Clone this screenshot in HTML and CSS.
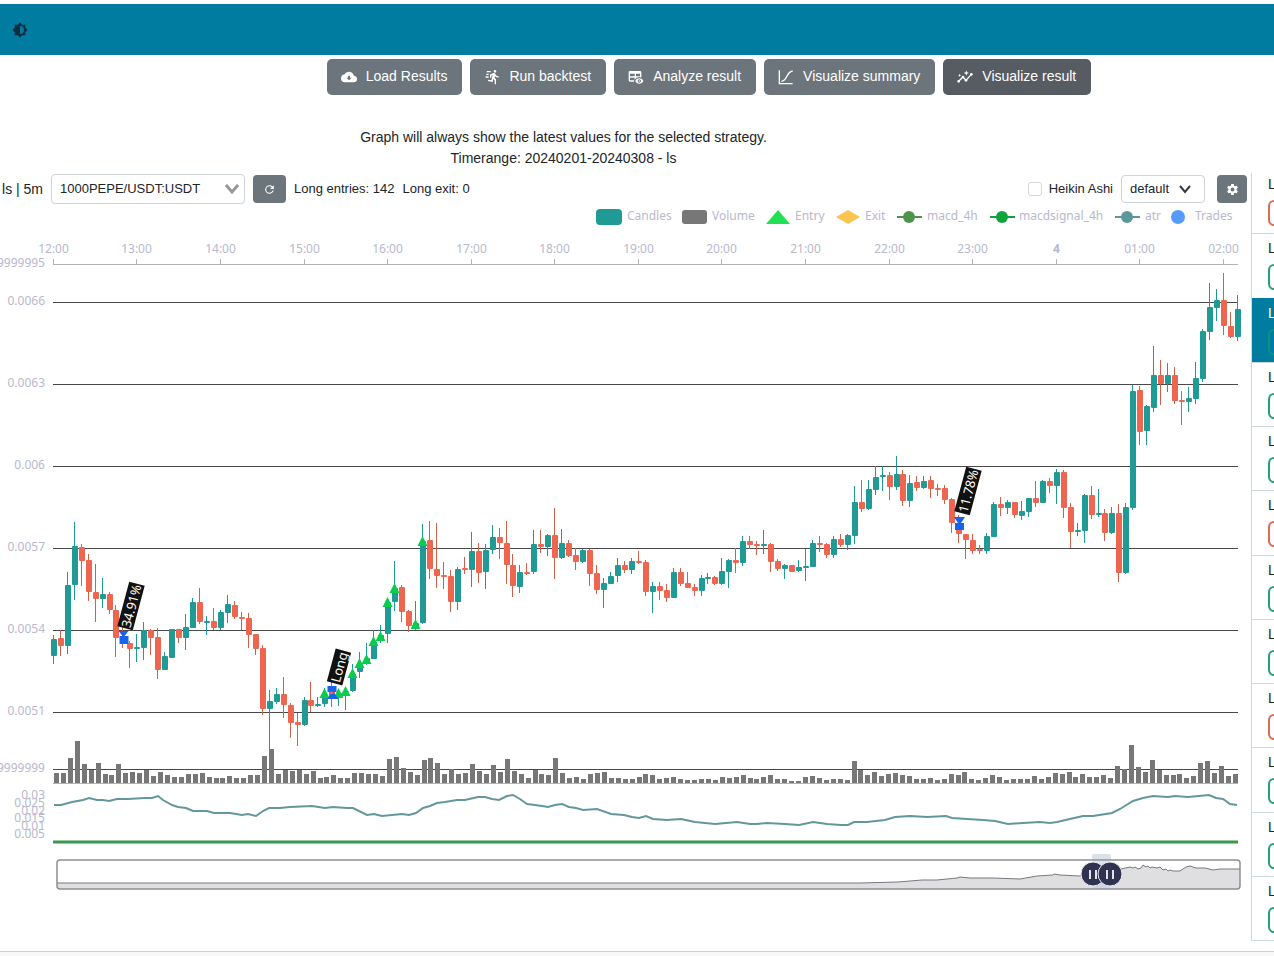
FILE: index.html
```html
<!DOCTYPE html>
<html lang="en">
<head>
<meta charset="utf-8">
<title>Backtest result</title>
<link rel="stylesheet" href="styles.css">
</head>
<body>
<header class="topbar">
  <button class="theme-toggle" aria-label="Toggle theme">
    <svg class="icon" viewBox="0 0 24 24"><path fill-rule="evenodd" d="M12,18V6A6,6 0 0,1 18,12A6,6 0 0,1 12,18M20,15.31L23.31,12L20,8.69V4H15.31L12,.69L8.69,4H4V8.69L.69,12L4,15.31V20H8.69L12,23.31L15.31,20H20V15.31Z"/></svg>
  </button>
</header>
<nav class="tabs">
  <button class="tab"><svg class="icon" viewBox="0 0 24 24"><path d="M8,13H10.55V10H13.45V13H16L12,17M19.35,10.04C18.67,6.59 15.64,4 12,4C9.11,4 6.61,5.64 5.36,8.04C2.35,8.36 0,10.9 0,14A6,6 0 0,0 6,20H19A5,5 0 0,0 24,15C24,12.36 21.95,10.22 19.35,10.04Z"/></svg><span>Load Results</span></button>
  <button class="tab"><svg class="icon" viewBox="0 0 24 24"><path d="M16.5,5.5A2,2 0 0,0 18.5,3.5A2,2 0 0,0 16.5,1.5A2,2 0 0,0 14.5,3.5A2,2 0 0,0 16.5,5.5M12.9,19.4L13.9,15L16,17V23H18V15.5L15.9,13.5L16.5,10.5C17.89,12.09 19.89,13 22,13V11C20.24,11.03 18.6,10.11 17.7,8.6L16.7,7C16.34,6.4 15.7,6 15,6C14.7,6 14.5,6.1 14.2,6.1L9,8.3V13H11V9.6L12.8,8.9L11.2,17L6.3,16L5.9,18L12.9,19.4M4,9A1,1 0 0,1 3,8A1,1 0 0,1 4,7H7V9H4M5,5A1,1 0 0,1 4,4A1,1 0 0,1 5,3H10V5H5M3,13A1,1 0 0,1 2,12A1,1 0 0,1 3,11H7V13H3Z"/></svg><span>Run backtest</span></button>
  <button class="tab"><svg class="icon" viewBox="0 0 24 24"><path fill-rule="evenodd" d="M18 3H3a2 2 0 0 0-2 2v12a2 2 0 0 0 2 2h6.4l-.4-1 .4-1H3v-4h7v3l2-2.2V13h1.2a8 8 0 0 1 6.8-.4V5a2 2 0 0 0-2-2M10 11H3V7h7zM18 11h-6V7h6zM17 14c2.7 0 5.1 1.700 6 4-.9 2.300-3.300 4-6 4s-5.100-1.700-6-4c.9-2.300 3.300-4 6-4M17 15.500a2.500 2.500 0 1 0 0 5 2.500 2.500 0 0 0 0-5M17 17a1 1 0 1 1 0 2 1 1 0 0 1 0-2"/></svg><span>Analyze result</span></button>
  <button class="tab"><svg class="icon line" viewBox="0 0 24 24"><path d="M2 2v20h20M5 18.500C15 18 11 5 22 3"/></svg><span>Visualize summary</span></button>
  <button class="tab active"><svg class="icon line" viewBox="0 0 24 24"><path d="M2.500 18.500L9 12l4.500 5L21.500 8"/><g class="solid"><circle cx="2.500" cy="18.500" r="2"/><circle cx="9" cy="12" r="2"/><circle cx="13.500" cy="17" r="2"/><circle cx="21.500" cy="8" r="2"/><path d="M14 2l1 3 3 1-3 1-1 3-1-3-3-1 3-1zM4 7l.7 1.800 1.800.7-1.800.7L4 12l-.7-1.800-1.800-.7 1.800-.7z"/></g></svg><span>Visualize result</span></button>
</nav>
<div class="content">
  <main class="panel">
    <div class="summary">
      <p>Graph will always show the latest values for the selected strategy.</p>
      <p>Timerange: 20240201-20240308 - ls</p>
    </div>
    <div class="toolbar">
      <label class="strategy" for="pair">ls | 5m</label>
      <div class="select pair">
        <select id="pair"><option>1000PEPE/USDT:USDT</option></select>
        <svg class="chevron thick" viewBox="0 0 14 10"><path d="M1 1l6 7 6-7"/></svg>
      </div>
      <button class="square refresh" aria-label="Refresh chart"><svg class="icon small" viewBox="0 0 24 24"><path d="M17.65,6.35C16.2,4.9 14.21,4 12,4A8,8 0 0,0 4,12A8,8 0 0,0 12,20C15.73,20 18.84,17.45 19.73,14H17.65C16.83,16.33 14.61,18 12,18A6,6 0 0,1 6,12A6,6 0 0,1 12,6C13.66,6 15.14,6.69 16.22,7.78L13,11H20V4L17.65,6.35Z"/></svg></button>
      <span>Long entries: 142</span>
      <span>Long exit: 0</span>
      <div class="options">
        <label class="check"><input type="checkbox"><span>Heikin Ashi</span></label>
        <div class="select plot">
          <select aria-label="Plot configuration"><option>default</option></select>
          <svg class="chevron" viewBox="0 0 14 10"><path d="M2 2l5 6 5-6"/></svg>
        </div>
        <button class="square settings" aria-label="Plot settings"><svg class="icon small" viewBox="0 0 24 24"><path d="M12,15.5A3.5,3.5 0 0,1 8.5,12A3.5,3.5 0 0,1 12,8.5A3.5,3.5 0 0,1 15.5,12A3.5,3.5 0 0,1 12,15.5M19.43,12.97C19.47,12.65 19.5,12.33 19.5,12C19.5,11.67 19.47,11.34 19.43,11L21.54,9.37C21.73,9.22 21.78,8.95 21.66,8.73L19.66,5.27C19.54,5.05 19.27,4.96 19.05,5.05L16.56,6.05C16.04,5.66 15.5,5.32 14.87,5.07L14.5,2.42C14.46,2.18 14.25,2 14,2H10C9.75,2 9.54,2.18 9.5,2.42L9.13,5.07C8.5,5.32 7.96,5.66 7.44,6.05L4.95,5.05C4.73,4.96 4.46,5.05 4.34,5.27L2.34,8.73C2.21,8.95 2.27,9.22 2.46,9.37L4.57,11C4.53,11.34 4.5,11.67 4.5,12C4.5,12.33 4.53,12.65 4.57,12.97L2.46,14.63C2.27,14.78 2.21,15.05 2.34,15.27L4.34,18.73C4.46,18.95 4.73,19.03 4.95,18.95L7.44,17.94C7.96,18.34 8.5,18.68 9.13,18.93L9.5,21.58C9.54,21.82 9.75,22 10,22H14C14.25,22 14.46,21.82 14.5,21.58L14.87,18.93C15.5,18.67 16.04,18.34 16.56,17.94L19.05,18.95C19.27,19.03 19.54,18.95 19.66,18.73L21.66,15.27C21.78,15.05 21.73,14.78 21.54,14.63L19.43,12.97Z"/></svg></button>
      </div>
    </div>
    <svg class="chart" id="chart" viewBox="0 204 1251 738" role="img" aria-label="Candlestick chart"></svg>
  </main>
  <aside class="trades">
    <ul class="trade-list">
      <li class="trade loss"><span>L</span><i></i></li>
      <li class="trade"><span>L</span><i></i></li>
      <li class="trade selected"><span>L</span><i></i></li>
      <li class="trade"><span>L</span><i></i></li>
      <li class="trade"><span>L</span><i></i></li>
      <li class="trade loss"><span>L</span><i></i></li>
      <li class="trade"><span>L</span><i></i></li>
      <li class="trade"><span>L</span><i></i></li>
      <li class="trade loss"><span>L</span><i></i></li>
      <li class="trade"><span>L</span><i></i></li>
      <li class="trade"><span>L</span><i></i></li>
      <li class="trade"><span>L</span><i></i></li>
    </ul>
  </aside>
</div>
<footer class="footer"></footer>
<script src="chart.js"></script>
</body>
</html>
```

FILE: styles.css
```css
* { box-sizing: border-box; }

body {
  margin: 0;
  min-height: 100vh;
  display: flex;
  flex-direction: column;
  overflow-x: hidden;
  background: #fff;
  color: #212529;
  font: 13px/20px "Liberation Sans", Arial, sans-serif;
}

button, select { font: inherit; }
button { border: 0; padding: 0; cursor: pointer; }

.icon { width: 16px; height: 16px; fill: currentColor; flex: none; }
.icon.small { width: 13px; height: 13px; }
.icon.line { fill: none; stroke: currentColor; stroke-width: 2; }
.icon .solid { fill: currentColor; stroke: none; }

.topbar {
  height: 51px;
  margin-top: 4px;
  padding-left: 12px;
  display: flex;
  align-items: center;
  background: #007ca1;
}
.theme-toggle { display: flex; background: none; color: #0b2f3f; }

.tabs {
  display: flex;
  justify-content: center;
  gap: 8px;
  padding: 4px 0 0 144px;
}
.tab {
  display: flex;
  align-items: center;
  gap: 9px;
  height: 36px;
  padding: 0 15px 0 14px;
  border-radius: 5px;
  background: #6c757b;
  color: #fff;
  font-size: 14px;
  white-space: nowrap;
}
.tab span { padding-bottom: 2px; }
.tab.active { background: #565c62; }

.content { display: flex; }
.panel { flex: 1; min-width: 0; padding-top: 32px; }

.summary {
  padding-right: 124px;
  text-align: center;
  font-size: 14px;
  line-height: 21px;
}
.summary p { margin: 0; }

.toolbar {
  display: flex;
  align-items: center;
  gap: 8px;
  height: 30px;
  margin-top: 5px;
  padding-right: 4px;
  white-space: nowrap;
}
.strategy { width: 43px; text-align: right; font-size: 14px; }

.select { position: relative; }
.select select {
  appearance: none;
  width: 100%;
  height: 100%;
  padding: 0 8px;
  border: 1px solid #ced4da;
  border-radius: 4px;
  background: #fff;
  color: #212529;
}
.pair { width: 194px; height: 30px; }
.plot { width: 84px; height: 28px; }
.chevron {
  position: absolute;
  top: 50%;
  right: 13px;
  width: 14px;
  height: 10px;
  margin-top: -5px;
  fill: none;
  stroke: #343a40;
  stroke-width: 2;
  pointer-events: none;
}
.pair .chevron { right: 6px; }
.chevron.thick { stroke: #999; stroke-width: 3; }

.square {
  display: flex;
  align-items: center;
  justify-content: center;
  height: 28px;
  border-radius: 4px;
  background: #6c757b;
  color: #fff;
}
.refresh { width: 33px; }
.settings { width: 30px; margin-left: 4px; }

.options { display: flex; align-items: center; gap: 8px; margin-left: auto; }
.check { display: flex; align-items: center; gap: 7px; }
.check input {
  appearance: none;
  width: 14px;
  height: 14px;
  margin: 0;
  border: 1px solid #d5d9dc;
  border-radius: 3px;
}

.chart { display: block; width: 100%; height: auto; }
.chart text { font: 12px "Noto Sans", "Open Sans", sans-serif; fill: #b9b8ce; }
.chart .bold { font-weight: bold; }
.chart .tag text { fill: #fff; font-size: 13px; }
.chart .tag rect { fill: #111; }
.chart .end { text-anchor: end; }
.chart .middle { text-anchor: middle; }
.chart .grid { stroke: #484848; }
.chart .axis { stroke: #b2b2b8; }
.chart .up { fill: #1f9a94; stroke: #1f9a94; }
.chart .down { fill: #ef6650; stroke: #d0604a; }
.chart .up rect, .chart .down rect { stroke: none; }
.chart .volume { fill: #777; }
.chart .entry { fill: #08cc4c; }
.chart .marker { fill: #1763ee; }
.chart .atr { fill: none; stroke: #64979c; stroke-width: 2; }

.trades {
  flex: none;
  width: 23px;
  height: 768px;
  margin-top: 78px;
  overflow: hidden;
  border-left: 1px solid #ced9d9;
}
.trade-list {
  display: grid;
  grid-auto-rows: 1fr;
  height: 771px;
  margin: -3px 0 0;
  padding: 0;
  list-style: none;
}
.trade {
  padding: 4px 0 0 16px;
  border-bottom: 1px solid #ced9d9;
  font-size: 14px;
  white-space: nowrap;
}
.trade span { display: block; }
.trade i {
  display: block;
  width: 64px;
  height: 26px;
  margin-top: 6px;
  border: 2px solid #22a079;
  border-radius: 6px;
}
.trade.loss i { border-color: #df6a51; }
.trade.selected { margin: -1px 0 0 -1px; padding: 5px 0 0 17px; background: #007ca1; color: #fff; }
.trade.selected i { border-color: #0b9180; }

.footer {
  flex: 1;
  margin-top: 9px;
  border-top: 1px solid #cdd1d1;
  background: #f8f8f8;
}
```

FILE: chart.js
```js
// Each candle: body top, body bottom, high, low, rising (1) or falling (0).
const candles = [
[639,656,635,664,1],[638,646,630,656,0],[585,646,572,654,1],[546,585,522,600,1],[547,561,544,586,0],
[560,592,554,601,0],[592,599,564,622,0],[594,599,578,608,1],[594,610,592,614,0],[610,638,605,657,0],
[638,644,627,648,0],[643,649,641,668,0],[647,649,634,662,1],[630,648,622,660,1],[630,638,629,655,0],
[637,670,628,679,0],[656,670,652,670,1],[629,658,629,658,1],[629,638,629,643,0],[627,638,614,650,1],
[602,628,598,628,1],[602,622,588,624,0],[621,622,616,635,1],[621,628,608,630,0],[612,628,610,630,1],
[604,613,595,623,1],[605,617,601,619,0],[617,619,612,630,0],[618,635,613,648,0],[634,649,634,655,0],
[648,709,645,715,0],[701,709,690,749,1],[694,702,688,704,1],[694,705,677,718,0],[705,723,703,738,0],
[722,725,713,746,0],[700,725,697,726,1],[700,706,682,712,0],[704,706,697,707,1],[695,704,688,707,1],
[690,699,682,707,0],[693,696,690,706,1],[691,695,687,710,1],[674,691,664,692,1],[663,672,652,678,1],
[658,663,643,665,1],[642,659,630,659,1],[635,640,625,643,1],[602,634,600,643,1],[588,602,561,611,1],
[587,612,585,622,0],[611,626,610,632,0],[623,627,601,630,1],[541,623,524,624,1],[540,569,521,579,0],
[569,576,523,588,0],[575,577,562,589,0],[576,602,570,612,0],[569,602,567,610,1],[568,570,557,574,0],
[551,570,532,587,1],[551,573,543,583,0],[550,572,544,589,1],[537,550,525,554,1],[537,543,528,559,0],
[543,565,521,584,0],[565,586,554,597,0],[572,587,565,593,1],[572,573,563,575,0],[544,572,530,574,1],
[544,547,530,553,0],[535,547,534,556,1],[535,558,508,579,0],[543,558,529,559,1],[543,556,540,557,0],
[555,562,548,570,0],[550,562,549,563,1],[550,574,549,586,0],[573,590,565,594,0],[583,590,578,608,1],
[576,584,572,584,1],[565,576,558,582,1],[565,570,561,573,0],[561,570,558,574,1],[561,562,551,564,0],
[562,592,560,596,0],[586,592,582,613,1],[586,591,582,600,0],[590,598,584,602,0],[572,598,568,598,1],
[572,584,568,586,0],[583,588,572,588,0],[587,591,584,596,0],[578,591,575,596,1],[577,579,573,584,1],
[577,584,576,585,0],[571,584,558,585,1],[560,572,559,588,1],[560,563,548,573,0],[541,563,536,566,1],
[541,545,536,549,0],[544,545,541,555,0],[544,545,530,554,1],[544,562,543,572,0],[561,569,559,571,0],
[565,569,564,579,1],[565,572,565,572,0],[567,571,560,572,1],[566,568,549,581,1],[543,567,540,567,1],
[543,545,536,552,0],[544,555,543,558,0],[539,555,536,558,1],[539,545,534,547,0],[535,545,534,550,1],
[502,536,486,544,1],[502,509,480,512,0],[489,509,480,510,1],[477,490,466,495,1],[475,477,466,491,1],
[475,487,472,500,0],[474,487,456,490,1],[474,501,470,506,0],[483,501,475,507,1],[482,488,476,491,0],
[481,488,476,489,1],[480,489,476,498,0],[488,489,484,496,0],[488,500,485,504,0],[499,523,498,533,0],
[523,534,515,543,0],[534,540,534,559,0],[540,551,534,554,0],[549,551,545,554,0],[536,551,533,554,1],
[504,537,502,537,1],[504,508,497,516,0],[502,508,500,514,1],[502,515,502,518,0],[511,516,501,520,1],
[498,512,498,517,1],[498,503,481,507,0],[481,503,480,503,1],[481,486,478,493,0],[472,486,469,504,1],
[472,508,470,518,0],[507,532,503,548,0],[530,532,523,536,1],[495,531,494,543,1],[495,515,486,519,0],
[513,515,489,517,1],[513,533,509,541,0],[513,533,507,534,1],[513,573,504,582,0],[507,573,503,574,1],
[391,508,385,510,1],[390,432,386,445,0],[406,431,405,445,1],[375,408,346,412,1],[375,384,360,405,0],
[375,384,363,392,1],[375,401,367,404,0],[400,402,391,425,0],[398,402,387,412,1],[378,399,362,404,1],
[331,379,329,382,1],[307,332,283,340,1],[300,308,289,321,1],[300,326,273,335,0],[326,337,312,338,0],
[309,337,295,341,1]];

const volumes = [
10,10,25,42,19,13,20,9,8,19,10,11,10,13,7,11,8,6,6,9,9,10,6,5,5,7,5,5,8,8,27,34,9,13,12,13,9,12,5,6,
8,5,5,10,10,9,9,7,24,26,15,11,8,23,25,20,9,14,9,10,19,12,9,18,11,24,12,9,5,13,9,8,25,10,5,6,4,9,10,11,
5,5,4,4,6,9,8,4,5,6,4,3,3,4,4,3,6,5,6,8,5,4,6,8,4,4,2,2,6,7,5,3,4,4,3,22,13,8,11,7,
9,10,8,7,4,4,5,3,4,9,8,11,4,3,5,8,6,3,4,4,4,7,4,6,10,9,11,6,9,6,6,8,5,17,14,38,16,11,23,13,
8,8,9,5,7,20,22,10,17,7,9];

// x, y pairs for the atr line
const atr = [
54,805,61,805,72,802,83,800,89,798,97,800,103,800,109,801,117,799,128,799,145,798,152,798,158,796,
163,800,172,805,178,807,186,808,193,811,207,811,214,813,230,813,242,815,248,814,256,816,263,811,269,808,
280,808,290,807,312,806,325,808,333,807,347,808,353,808,367,815,374,814,382,816,402,814,409,815,416,813,
423,808,430,806,437,803,445,802,457,800,465,800,478,797,485,797,492,799,499,800,507,796,513,795,520,799,
527,804,535,805,542,806,548,807,555,805,562,804,569,807,576,808,583,810,597,809,611,814,624,815,632,817,
639,818,646,816,653,819,667,820,681,819,695,822,715,824,737,822,750,824,757,824,767,823,785,824,799,825,
813,822,827,824,841,825,848,825,854,822,867,822,885,820,895,817,910,816,927,817,946,816,952,818,967,819,
983,820,995,821,1008,824,1023,823,1040,822,1050,823,1057,822,1070,819,1083,816,1093,816,1112,813,1120,809,
1133,801,1143,798,1153,796,1168,797,1175,796,1188,797,1209,795,1216,798,1223,799,1230,804,1237,805];

const overview = [
57,883,300,883,500,883,700,883,860,883,898,882,922,880,937,880,957,878,960,877,970,878,993,878,1020,879,
1037,876,1053,875,1054,874,1060,875,1080,876,1090,872,1110,870,1121,869,1130,867,1133,868,1135,867,1138,869,
1141,868,1143,865,1146,867,1148,866,1150,868,1152,867,1157,868,1160,867,1163,870,1166,869,1168,871,1170,870,
1173,871,1177,871,1180,871,1183,869,1186,867,1190,866,1196,868,1205,868,1213,870,1220,869,1240,869];

const hours = ["12:00","13:00","14:00","15:00","16:00","17:00","18:00","19:00","20:00","21:00","22:00","23:00","4","01:00","02:00"];
const left = 53.5, right = 1237.5;
const step = (right - left) / (candles.length - 1);
const cx = i => Math.round(left + i * step - 0.7) + 0.5;
const line = (x1, y1, x2, y2, cls) => `<line x1="${x1}" y1="${y1}" x2="${x2}" y2="${y2}" class="${cls}"/>`;
const text = (x, y, s, cls = "") => `<text x="${x}" y="${y}" class="${cls}">${s}</text>`;
let out = "";

// Legend
out += `<rect x="596" y="209" width="26" height="16" rx="4" fill="#1f9a94"/>
<rect x="682" y="210" width="25" height="14" rx="3" fill="#777"/>
<path d="M778 210l12 14h-24z" fill="#22e052"/>
<path d="M836 217l12-7 12 7-12 7z" fill="#fbc44e"/>`;
for (const [x, color] of [[909, "#4c944c"], [1002, "#0ca23c"], [1127, "#5c979c"]]) {
  out += `<path d="M${x - 12} 217h25" stroke="${color}" stroke-width="2"/><circle cx="${x}" cy="217" r="6" fill="${color}"/>`;
}
out += `<circle cx="1178" cy="217" r="7" fill="#559bfb"/>`;
for (const [x, s] of [[627, "Candles"], [712, "Volume"], [795, "Entry"], [865, "Exit"], [927, "macd_4h"], [1019, "macdsignal_4h"], [1145, "atr"], [1195, "Trades"]]) {
  out += text(x, 220, s);
}

// Axes and grid
out += line(53, 264.5, 1238, 264.5, "axis");
hours.forEach((h, k) => {
  const x = cx(k * 12);
  out += line(x, 259, x, 264, "axis") + text(x, 253, h, h === "4" ? "middle bold" : "middle");
});
["0.0066", "0.0063", "0.006", "0.0057", "0.0054", "0.0051"].forEach((p, k) => {
  const y = 302.5 + k * 82;
  out += line(53, y, 1238, y, "grid") + text(45, y + 2.5, p, "end");
});
out += text(45, 267, "9999995", "end") + text(45, 772, "9999999", "end") + line(53, 769.5, 1238, 769.5, "grid");
["0.03", "0.025", "0.02", "0.015", "0.01", "0.005"].forEach((p, k) => {
  out += text(45, 799 + Math.round(k * 7.8), p, "end");
});

// Candles
candles.forEach(([top, bottom, high, low, rising], i) => {
  const x = cx(i);
  out += `<g class="${rising ? "up" : "down"}">${line(x, high, x, low, "")}<rect x="${x - 2.5}" y="${top}" width="6" height="${Math.max(2, bottom - top)}" rx="1"/></g>`;
});

// Volume
volumes.forEach((v, i) => {
  out += `<rect class="volume" x="${Math.round(54 + i * 6.935)}" y="${783 - v}" width="5" height="${v}"/>`;
});
out += line(53, 783.5, 1238, 783.5, "axis");

// Entry signals
for (const [i, y] of [[39,693],[41,693],[42,691],[43,673],[44,663],[45,659],[46,641],[47,636],[48,602],[49,588],[52,624],[53,541]]) {
  out += `<path class="entry" d="M${cx(i)} ${y - 5}l5 10h-10z"/>`;
}

// Trades
out += `<path class="marker" d="M118.500 631h10l-4 5h4v8h-9v-8h3z"/>
<path class="marker" d="M327.500 686h9v6h-3l5 7h-11l4-7h-4z"/>
<path class="marker" d="M954 517h11l-4 6h3v7h-9v-7h3z"/>
<path d="M332 691l2 3h-4z" fill="#ef6650"/>`;
for (const [x, y, w, s] of [[131, 606, 46, "34.91%"], [339, 667, 34, "Long"], [968, 491, 46, "11.78%"]]) {
  out += `<g class="tag" transform="translate(${x} ${y}) rotate(-75)"><rect x="${-w / 2}" y="-8" width="${w}" height="16"/>${text(0, 5, s, "middle")}</g>`;
}

// Indicators
out += `<path d="M53 842h1185" stroke="#38984f" stroke-width="3"/><polyline class="atr" points="${atr.join(" ")}"/>`;

// Range slider
out += `<rect x="1092" y="854" width="19" height="7" rx="2" fill="#dbe1e8"/>
<rect x="57" y="860" width="1183" height="29" rx="3" fill="#fff"/>
<rect x="1093" y="861" width="17" height="27" fill="#d9e4f6"/>
<polygon points="${overview.join(" ")} 1240,889 57,889" fill="#dfdfe1"/>
<polyline points="${overview.join(" ")}" fill="none" stroke="#777a80"/>
<rect x="1093" y="871" width="17" height="17" fill="#cbd6ea"/>
<rect x="57" y="860" width="1183" height="29" rx="3" fill="none" stroke="#909094" stroke-width="1.500"/>`;
for (const x of [1093, 1110]) {
  out += `<circle cx="${x}" cy="874" r="12" fill="#30334f" stroke="#e8ebf3"/><path d="M${x - 3} 870v9M${x + 3} 870v9" stroke="#dfe3ee" stroke-width="2"/>`;
}

document.getElementById("chart").innerHTML = out;
```
